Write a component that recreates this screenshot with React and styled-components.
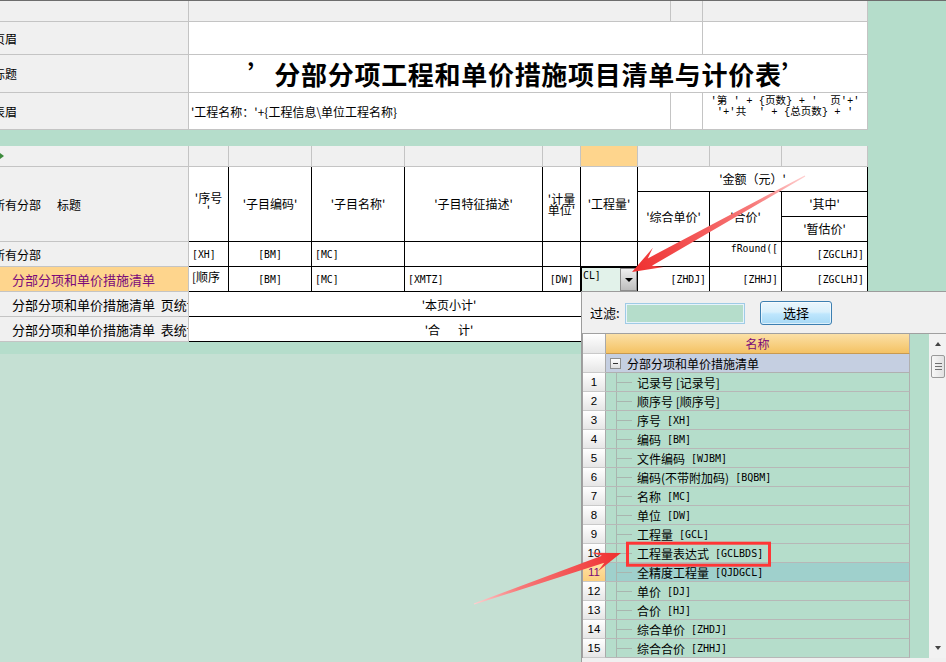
import React from "react";
import styled, { createGlobalStyle } from "styled-components";

const CJK = `"Noto Sans CJK SC", "Noto Sans", sans-serif`;
const MONO = `"DejaVu Sans Mono", "Liberation Mono", monospace`;
const GRID = "#c4c4c4";
const BAND = "#b5ddcb";
const LOWER = "#c5e0d3";
const HEAD_BG = "#f0f0f0";
const SEL = "#fed58d";
const PURPLE = "#7a0a7a";

const GlobalStyle = createGlobalStyle`
  html, body { margin: 0; padding: 0; }
  body { background: ${LOWER}; font-family: ${CJK}; font-size: 12px; color: #000; }
  * { box-sizing: border-box; }
`;

const Page = styled.div`
  position: relative;
  width: 946px;
  height: 662px;
  overflow: hidden;
  background: ${LOWER};
`;

const Sheet = styled.div`
  background: ${BAND};
  border-top: 1px solid #6d6d6d;
  padding-bottom: 12px;
  display: flex;
  flex-direction: column;
  align-items: flex-start;
  gap: 16px;
`;

/* ---------- top band (page header / title / table header) ---------- */
const TopGrid = styled.div`
  display: grid;
  grid-template-columns: 188px 481px 31px 164px;
  grid-template-rows: 20px 32px 37px 36px;
  gap: 1px;
  background: ${GRID};
  border-right: 1px solid ${GRID};
  border-bottom: 1px solid ${GRID};
`;

const StripCell = styled.div`
  background: ${(p) => (p.$active ? SEL : HEAD_BG)};
  display: flex;
  align-items: center;
  overflow: hidden;
`;

const LabelCell = styled.div`
  background: ${HEAD_BG};
  display: flex;
  align-items: center;
  overflow: hidden;
  white-space: nowrap;
  font-size: 12px;
`;

const Shift = styled.span`
  margin-left: -7px;
  white-space: pre;
`;

const Spacer = styled.span`
  display: inline-block;
  width: 16px;
`;

const PlainCell = styled.div`
  grid-column: ${(p) => p.$col || "auto"};
  background: #fff;
  display: flex;
  align-items: center;
  padding-left: 2px;
  overflow: hidden;
  white-space: nowrap;
  font-size: 12px;
`;

const TitleCell = styled.div`
  grid-column: 2 / 5;
  background: #fff;
  display: flex;
  align-items: center;
  justify-content: center;
  font-size: 26px;
  font-weight: 700;
  letter-spacing: 0.7px;
  white-space: nowrap;
  overflow: hidden;
  padding-bottom: 1px;
`;

const PageNoCell = styled.div`
  background: #fff;
  display: flex;
  justify-content: center;
  align-items: flex-start;
  padding-top: 3px;
  text-align: center;
  font-family: "Liberation Mono", "Noto Sans CJK SC", monospace;
  font-size: 10.5px;
  line-height: 11px;
  white-space: pre;
  overflow: hidden;
`;

/* ---------- body band ---------- */
const Section = styled.div`
  display: flex;
  flex-direction: column;
`;

const Strip = styled.div`
  display: grid;
  grid-template-columns: 188px 39px 82px 92px 137px 37px 56px 71px 71px 85px;
  grid-template-rows: 20px;
  gap: 1px;
  background: ${GRID};
  border-right: 1px solid ${GRID};
  border-bottom: 1px solid ${GRID};
`;

const Body = styled.div`
  display: flex;
  align-items: flex-start;
`;

const LeftCol = styled.div`
  display: grid;
  grid-template-columns: 188px;
  grid-template-rows: 74px repeat(4, 24px);
  gap: 1px;
  background: ${GRID};
  border-right: 1px solid ${GRID};
  border-bottom: 1px solid ${GRID};
`;

const TreeLabel = styled.div`
  background: ${(p) => (p.$selected ? SEL : HEAD_BG)};
  color: ${(p) => (p.$selected ? PURPLE : "#000")};
  display: flex;
  align-items: center;
  padding-left: 12px;
  font-size: 13px;
  white-space: pre;
  overflow: hidden;
`;

const DataGrid = styled.div`
  display: grid;
  grid-template-columns: 39px 82px 92px 137px 37px 56px 71px 71px 85px;
  grid-template-rows: repeat(7, 24px);
  gap: 1px;
  background: #000;
  border-right: 1px solid #000;
  border-bottom: 1px solid #000;
`;

const HeadCell = styled.div`
  grid-column: ${(p) => p.$col || "auto"};
  grid-row: ${(p) => p.$row || "auto"};
  background: #fff;
  display: flex;
  align-items: center;
  justify-content: center;
  text-align: center;
  line-height: ${(p) => p.$lh || "14px"};
  white-space: nowrap;
  overflow: hidden;
  font-size: 12px;
`;

const JUST = { left: "flex-start", center: "center", right: "flex-end" };

const DataCell = styled.div`
  grid-column: ${(p) => p.$col || "auto"};
  background: #fff;
  display: flex;
  align-items: ${(p) => (p.$top ? "flex-start" : "center")};
  justify-content: ${(p) => JUST[p.$align || "left"]};
  padding: ${(p) => (p.$top ? "1px 3px 0" : "0 3px")};
  white-space: pre;
  overflow: hidden;
  font-size: 12px;
`;

const Code = styled.span`
  font-family: ${MONO};
  font-size: 9.8px;
  letter-spacing: 0;
`;

const EditCell = styled.div`
  background: #e2f2ea;
  box-shadow: inset 1px 1px 0 #000;
  display: flex;
  align-items: flex-start;
  padding: 3px 0 0 2px;
`;

const DropButton = styled.div`
  margin-left: auto;
  margin-top: -2px;
  align-self: stretch;
  width: 17px;
  background: linear-gradient(#efefef, #bdbdbd);
  border: 1px solid #8c8c8c;
  display: flex;
  align-items: center;
  justify-content: center;
`;

const DownTriangle = styled.span`
  width: 0;
  height: 0;
  border-left: 4px solid transparent;
  border-right: 4px solid transparent;
  border-top: 4px solid #000;
  margin-top: 1px;
`;

/* ---------- dropdown field list ---------- */
const Dropdown = styled.div`
  position: absolute;
  left: 581px;
  top: 291px;
  width: 365px;
  height: 371px;
  background: #f0f0f0;
  border-left: 1px solid #9c9c9c;
  border-top: 1px solid #9c9c9c;
  display: flex;
  flex-direction: column;
`;

const FilterBar = styled.div`
  height: 41px;
  display: flex;
  align-items: center;
  padding-left: 8px;
`;

const FilterLabel = styled.span`
  font-size: 13px;
  width: 35px;
`;

const FilterInput = styled.div`
  width: 120px;
  height: 21px;
  margin-top: 1px;
  background: #b5ddcb;
  border: 1px solid #9fcbe6;
  box-shadow: inset 0 0 0 1px #e6f3fb;
`;

const SelectButton = styled.div`
  margin-left: 15px;
  width: 72px;
  height: 24px;
  border: 1px solid #3c7fb1;
  border-radius: 3px;
  background: linear-gradient(#eaf6fd 0%, #d9f0fc 45%, #bee6fd 55%, #a7d9f5 100%);
  box-shadow: inset 0 0 0 1px rgba(255, 255, 255, 0.6);
  display: flex;
  align-items: center;
  justify-content: center;
  font-size: 13px;
`;

const ListFrame = styled.div`
  height: 325px;
  border-top: 1px solid #a0a0a0;
  border-left: 1px solid #a0a0a0;
  display: flex;
`;

const ListBody = styled.div`
  flex: 1;
  background: #b5ddcb;
  overflow: hidden;
`;

const ListRow = styled.div`
  display: flex;
  height: ${(p) => (p.$head ? 20 : 19)}px;
`;

const RowNum = styled.div`
  width: 23px;
  flex: none;
  border-right: 1px solid #a9a9a9;
  border-bottom: 1px solid #c9c9c9;
  background: ${(p) =>
    p.$selected ? "linear-gradient(#ffe3a6, #fbcf7e)" : "linear-gradient(#ffffff, #e6e6e6)"};
  color: ${(p) => (p.$selected ? PURPLE : "#000")};
  display: flex;
  align-items: center;
  justify-content: center;
  font-family: "Liberation Sans", Arial, sans-serif;
  font-size: 11.5px;
`;

const NameHeader = styled.div`
  width: 304px;
  border-right: 1px solid #b0b0b0;
  border-bottom: 1px solid #c89a50;
  background: linear-gradient(#fbe0a6, #f4c264);
  color: ${PURPLE};
  display: flex;
  align-items: center;
  justify-content: center;
  font-size: 12px;
`;

const GroupCell = styled.div`
  width: 304px;
  border-right: 1px solid #b0b0b0;
  border-bottom: 1px solid #b0b0b0;
  background: #c5cfe1;
  display: flex;
  align-items: center;
  padding-left: 4px;
  font-size: 12px;
`;

const Collapse = styled.span`
  width: 11px;
  height: 11px;
  margin-right: 6px;
  border: 1px solid #8e8e8e;
  background: linear-gradient(#ffffff, #dedede);
  display: flex;
  align-items: center;
  justify-content: center;
  &::before {
    content: "";
    width: 5px;
    height: 1px;
    background: #333;
  }
`;

const ItemCell = styled.div`
  width: 304px;
  border-right: 1px solid #b0b0b0;
  border-bottom: 1px solid #b7b7b7;
  background: ${(p) => (p.$selected ? "#9fd0cc" : "transparent")};
  display: flex;
  align-items: stretch;
  font-size: 12px;
  white-space: pre;
  overflow: hidden;
`;

const TreeGuide = styled.span`
  width: 16px;
  margin-left: 10px;
  border-left: 1px solid #a9b5af;
  background: linear-gradient(#a9b5af, #a9b5af) no-repeat left center / 100% 1px;
`;

const ItemText = styled.span`
  margin-left: 5px;
  display: flex;
  align-items: center;
`;

const ListCode = styled.span`
  font-family: ${MONO};
  font-size: 10px;
  margin-left: 6px;
`;

const ScrollBar = styled.div`
  width: 17px;
  flex: none;
  background: #f2f2f2;
  display: flex;
  flex-direction: column;
`;

const ScrollArrow = styled.div`
  height: 20px;
  display: flex;
  align-items: center;
  justify-content: center;
  &::before {
    content: "";
    width: 0;
    height: 0;
    border-left: 3.5px solid transparent;
    border-right: 3.5px solid transparent;
    ${(p) => (p.$down ? "border-top: 4px solid #444;" : "border-bottom: 4px solid #444;")}
  }
`;

const ScrollTrack = styled.div`
  flex: 1;
  padding: 1px 1px 0 2px;
`;

const Thumb = styled.div`
  height: 23px;
  border: 1px solid #9a9a9a;
  border-radius: 2px;
  background: linear-gradient(90deg, #f7f7f7, #e2e2e2);
  display: flex;
  align-items: center;
  justify-content: center;
`;

const Grip = styled.span`
  width: 7px;
  height: 7px;
  background: repeating-linear-gradient(#707070 0 1px, transparent 1px 3px);
`;

const Overlay = styled.svg`
  position: absolute;
  left: 0;
  top: 0;
  pointer-events: none;
`;

const ITEMS = [
  ["记录号", "[记录号]"],
  ["顺序号", "[顺序号]"],
  ["序号", "[XH]"],
  ["编码", "[BM]"],
  ["文件编码", "[WJBM]"],
  ["编码(不带附加码)", "[BQBM]"],
  ["名称", "[MC]"],
  ["单位", "[DW]"],
  ["工程量", "[GCL]"],
  ["工程量表达式", "[GCLBDS]"],
  ["全精度工程量", "[QJDGCL]"],
  ["单价", "[DJ]"],
  ["合价", "[HJ]"],
  ["综合单价", "[ZHDJ]"],
  ["综合合价", "[ZHHJ]"],
];

const hasCJK = (s) => /[\u4e00-\u9fff]/.test(s);

function arrowPoints([x1, y1], [x2, y2], head, barb, neck, tail) {
  const dx = x2 - x1;
  const dy = y2 - y1;
  const L = Math.hypot(dx, dy);
  const ux = dx / L;
  const uy = dy / L;
  const px = -uy;
  const py = ux;
  const bx = x2 - ux * head;
  const by = y2 - uy * head;
  const nx = x2 - ux * head * 0.68;
  const ny = y2 - uy * head * 0.68;
  const pts = [
    [x1 + px * tail, y1 + py * tail],
    [nx + px * neck, ny + py * neck],
    [bx + px * barb, by + py * barb],
    [x2, y2],
    [bx - px * barb, by - py * barb],
    [nx - px * neck, ny - py * neck],
    [x1 - px * tail, y1 - py * tail],
  ];
  return pts.map(([a, b]) => `${a.toFixed(1)},${b.toFixed(1)}`).join(" ");
}

const ARROWS = [
  { id: "a1", from: [805, 176], to: [632, 272], head: 30, barb: 11, neck: 4.2 },
  { id: "a2", from: [474, 604], to: [621, 553], head: 28, barb: 10, neck: 3.8 },
];

export default function App() {
  return (
    <>
      <GlobalStyle />
      <Page>
        <Sheet>
          <TopGrid>
            <StripCell />
            <StripCell />
            <StripCell />
            <StripCell />
            <LabelCell>
              <Shift>页眉</Shift>
            </LabelCell>
            <PlainCell $col="2 / 4" />
            <PlainCell />
            <LabelCell>
              <Shift>标题</Shift>
            </LabelCell>
            <TitleCell>’分部分项工程和单价措施项目清单与计价表’</TitleCell>
            <LabelCell>
              <Shift>表眉</Shift>
            </LabelCell>
            <PlainCell>{"'工程名称：'+{工程信息\\单位工程名称}"}</PlainCell>
            <PlainCell />
            <PageNoCell>{"'第 ' + {页数} + '  页'+'\n'+'共  ' + {总页数} + '"}</PageNoCell>
          </TopGrid>

          <Section>
            <Strip>
              <StripCell>
                <svg width="4" height="8" viewBox="0 0 4 8">
                  <path d="M0 1 L4 4 L0 7 Z" fill="#3c8a3c" />
                </svg>
              </StripCell>
              <StripCell />
              <StripCell />
              <StripCell />
              <StripCell />
              <StripCell />
              <StripCell $active />
              <StripCell />
              <StripCell />
              <StripCell />
            </Strip>
            <Body>
              <LeftCol>
                <LabelCell>
                  <Shift>
                    所有分部
                    <Spacer />
                    标题
                  </Shift>
                </LabelCell>
                <LabelCell>
                  <Shift>所有分部</Shift>
                </LabelCell>
                <TreeLabel $selected>分部分项和单价措施清单</TreeLabel>
                <TreeLabel>{"分部分项和单价措施清单  页统计"}</TreeLabel>
                <TreeLabel>{"分部分项和单价措施清单  表统计"}</TreeLabel>
              </LeftCol>
              <DataGrid>
                <HeadCell $col="1" $row="1 / 4" $lh="12px">
                  '序号
                  <br />'
                </HeadCell>
                <HeadCell $col="2" $row="1 / 4">'子目编码'</HeadCell>
                <HeadCell $col="3" $row="1 / 4">'子目名称'</HeadCell>
                <HeadCell $col="4" $row="1 / 4">'子目特征描述'</HeadCell>
                <HeadCell $col="5" $row="1 / 4" $lh="11px">
                  '计量
                  <br />
                  单位'
                </HeadCell>
                <HeadCell $col="6" $row="1 / 4">'工程量'</HeadCell>
                <HeadCell $col="7 / 10" $row="1">'金额（元）'</HeadCell>
                <HeadCell $col="7" $row="2 / 4">'综合单价'</HeadCell>
                <HeadCell $col="8" $row="2 / 4">'合价'</HeadCell>
                <HeadCell $col="9" $row="2">'其中'</HeadCell>
                <HeadCell $col="9" $row="3">'暂估价'</HeadCell>

                <DataCell>
                  <Code>[XH]</Code>
                </DataCell>
                <DataCell $align="center">
                  <Code>[BM]</Code>
                </DataCell>
                <DataCell>
                  <Code>[MC]</Code>
                </DataCell>
                <DataCell />
                <DataCell />
                <DataCell />
                <DataCell />
                <DataCell $align="right" $top>
                  <Code>fRound([</Code>
                </DataCell>
                <DataCell $align="right">
                  <Code>[ZGCLHJ]</Code>
                </DataCell>

                <DataCell $top>[顺序</DataCell>
                <DataCell $align="center">
                  <Code>[BM]</Code>
                </DataCell>
                <DataCell>
                  <Code>[MC]</Code>
                </DataCell>
                <DataCell>
                  <Code>[XMTZ]</Code>
                </DataCell>
                <DataCell $align="center">
                  <Code>[DW]</Code>
                </DataCell>
                <EditCell>
                  <Code>CL]</Code>
                  <DropButton>
                    <DownTriangle />
                  </DropButton>
                </EditCell>
                <DataCell $align="right">
                  <Code>[ZHDJ]</Code>
                </DataCell>
                <DataCell $align="right">
                  <Code>[ZHHJ]</Code>
                </DataCell>
                <DataCell $align="right">
                  <Code>[ZGCLHJ]</Code>
                </DataCell>

                <DataCell $col="span 7" $align="center">'本页小计'</DataCell>
                <DataCell />
                <DataCell />
                <DataCell $col="span 7" $align="center">{"'合\u3000\u2002计'"}</DataCell>
                <DataCell />
                <DataCell />
              </DataGrid>
            </Body>
          </Section>
        </Sheet>

        <Dropdown>
          <FilterBar>
            <FilterLabel>过滤:</FilterLabel>
            <FilterInput />
            <SelectButton>选择</SelectButton>
          </FilterBar>
          <ListFrame>
            <ListBody>
              <ListRow $head>
                <RowNum />
                <NameHeader>名称</NameHeader>
              </ListRow>
              <ListRow>
                <RowNum />
                <GroupCell>
                  <Collapse />
                  分部分项和单价措施清单
                </GroupCell>
              </ListRow>
              {ITEMS.map(([name, code], i) => {
                const selected = i === 10;
                return (
                  <ListRow key={code}>
                    <RowNum $selected={selected}>{i + 1}</RowNum>
                    <ItemCell $selected={selected}>
                      <TreeGuide />
                      <ItemText>
                        {name}
                        {hasCJK(code) ? <span>{" " + code}</span> : <ListCode>{code}</ListCode>}
                      </ItemText>
                    </ItemCell>
                  </ListRow>
                );
              })}
            </ListBody>
            <ScrollBar>
              <ScrollArrow />
              <ScrollTrack>
                <Thumb>
                  <Grip />
                </Thumb>
              </ScrollTrack>
              <ScrollArrow $down />
            </ScrollBar>
          </ListFrame>
        </Dropdown>

        <Overlay width="946" height="662" viewBox="0 0 946 662">
          <defs>
            {ARROWS.map((a) => (
              <linearGradient
                key={a.id}
                id={`g-${a.id}`}
                gradientUnits="userSpaceOnUse"
                x1={a.from[0]}
                y1={a.from[1]}
                x2={a.to[0]}
                y2={a.to[1]}
              >
                <stop offset="0" stopColor="#ffd0d0" />
                <stop offset="0.3" stopColor="#f77a7a" />
                <stop offset="1" stopColor="#ef2f2f" />
              </linearGradient>
            ))}
          </defs>
          <rect x="627.5" y="543.2" width="142" height="22" fill="none" stroke="#ff3636" strokeWidth="3" />
          {ARROWS.map((a) => (
            <polygon
              key={a.id}
              points={arrowPoints(a.from, a.to, a.head, a.barb, a.neck, 0.6)}
              fill={`url(#g-${a.id})`}
            />
          ))}
        </Overlay>
      </Page>
    </>
  );
}
